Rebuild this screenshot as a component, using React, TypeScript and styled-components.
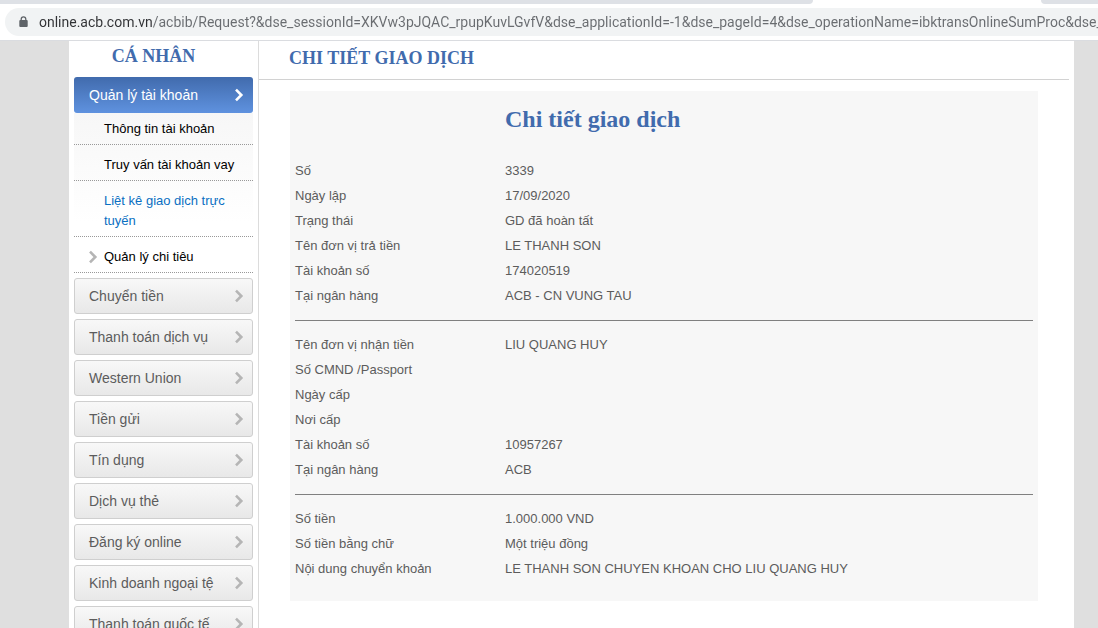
import React from "react";
import styled, { createGlobalStyle, css } from "styled-components";

const sans = `"Liberation Sans", Arial, sans-serif`;
const serif = `"Liberation Serif", "Times New Roman", serif`;

const GlobalStyle = createGlobalStyle`
  *, *::before, *::after { box-sizing: border-box; }
  html { height: 100%; }
  body {
    margin: 0;
    height: 100%;
    overflow: hidden;
    background: #dfdfdf;
    color: #5c5c5c;
    font: 13px/25px ${sans};
  }
  #root { height: 100%; }
`;

const Screen = styled.div`
  display: flex;
  flex-direction: column;
  height: 100%;
`;

const TabStrip = styled.div`
  flex: none;
  display: flex;
  height: 4px;
  background: #fff;
`;

const TabEdge = styled.div<{ $side: "left" | "right" }>`
  background: #dee1e6;
  ${({ $side }) =>
    $side === "left"
      ? css`
          flex: 1;
          border-bottom-right-radius: 4px;
        `
      : css`
          width: 57px;
          margin-left: 228px;
          border-bottom-left-radius: 4px;
        `}
`;

const Toolbar = styled.div`
  flex: none;
  padding: 4px 0 4px 5px;
  background: #fff;
  border-bottom: 1px solid #dadce0;
`;

const AddressBar = styled.label`
  display: flex;
  align-items: center;
  gap: 11px;
  height: 28px;
  padding-left: 14px;
  background: #f1f3f4;
  border-radius: 14px 0 0 14px;
`;

const AddressInput = styled.input`
  flex: 1;
  min-width: 0;
  height: 28px;
  padding: 0;
  border: 0;
  outline: 0;
  color: transparent;
  background: linear-gradient(to right, #303134 114px, #696c70 114px);
  -webkit-background-clip: text;
  background-clip: text;
  font: 14px/28px Roboto, "Noto Sans", sans-serif;
`;

const Page = styled.div`
  flex: 1;
  min-height: 0;
  display: flex;
  margin: 0 24px 0 69px;
  overflow: hidden;
  background: #fff;
`;

const Sidebar = styled.aside`
  flex: none;
  width: 190px;
  padding: 0 5px;
  border-right: 1px solid #dcdcdc;
`;

const SidebarTitle = styled.h2`
  margin: 0;
  padding: 3px 20px 9px 0;
  color: #416bad;
  font: bold 18px/24px ${serif};
  text-align: center;
`;

const Menu = styled.ul`
  margin: 0;
  padding: 0;
  list-style: none;
`;

const MenuItem = styled.li`
  margin-bottom: 5px;
`;

const MenuButton = styled.button<{ $active?: boolean }>`
  display: flex;
  align-items: center;
  justify-content: space-between;
  width: 100%;
  height: 36px;
  padding: 0 8px 0 14px;
  border: 1px solid #cfcfcf;
  border-radius: 3px;
  background: linear-gradient(#f8f8f8, #e8e8e8);
  color: #5c5c5c;
  font: 14px/20px ${sans};
  text-align: left;
  white-space: nowrap;
  ${({ $active }) =>
    $active &&
    css`
      border-color: transparent;
      background: linear-gradient(#416bad, #5f92df) border-box;
      color: #fff;
    `}
`;

const SubMenu = styled.ul`
  margin: 0;
  padding: 0;
  list-style: none;
  background: linear-gradient(#f7f7f7, #fff 110px);
`;

const SubItem = styled.li<{ $first?: boolean }>`
  padding: ${({ $first }) => ($first ? "6px 0 5px" : "10px 0 5px")};
  border-bottom: 1px dotted #999;
`;

const SubLink = styled.a<{ $current?: boolean }>`
  display: flex;
  align-items: center;
  padding-left: 14px;
  padding-right: 20px;
  color: ${({ $current }) => ($current ? "#0a6fc2" : "#000")};
  font: 13px/20px ${sans};
  text-decoration: none;
`;

const SubMarker = styled.span`
  flex: none;
  display: flex;
  width: 16px;
`;

const SubText = styled.span`
  flex: none;
  width: 134px;
`;

const Main = styled.main`
  flex: 1;
  min-width: 0;
  padding-right: 5px;
`;

const PageTitle = styled.h1`
  margin: 0;
  padding: 5px 30px 9px;
  border-bottom: 1px solid #d2d2d2;
  color: #416bad;
  font: bold 18px/24px ${serif};
`;

const Panel = styled.section`
  margin: 11px 31px 0;
  padding: 12px 5px 20px;
  background: #f7f7f7;
`;

const PanelTitle = styled.h2`
  margin: 0;
  padding: 0 0 23px 210px;
  color: #416bad;
  font: bold 24px/32px ${serif};
`;

const Divider = styled.hr`
  height: 1px;
  margin: 12px 0 11px;
  border: 0;
  background: #808080;
`;

const DetailTable = styled.table`
  width: 100%;
  table-layout: fixed;
  border-collapse: collapse;
`;

const Label = styled.th`
  width: 210px;
  height: 25px;
  padding: 0;
  font-weight: normal;
  text-align: left;
`;

const Value = styled.td`
  height: 25px;
  padding: 0;
`;

const LockIcon = () => (
  <svg width="9" height="12" viewBox="0 0 9 12" aria-hidden="true">
    <path d="M2.2 5V3.2a2.3 2.3 0 0 1 4.6 0V5" fill="none" stroke="#5f6368" strokeWidth="1.3" />
    <rect x="0.3" y="4" width="8.4" height="7" rx="1" fill="#5f6368" />
  </svg>
);

const Chevron = ({ color = "#b5b5b5" }: { color?: string }) => (
  <svg width="10" height="14" viewBox="0 0 10 14" aria-hidden="true">
    <path d="M2 1.7 7.3 7 2 12.3" fill="none" stroke={color} strokeWidth="2.6" />
  </svg>
);

type SubEntry = { text: string; current?: boolean; expandable?: boolean };

const accountLinks: SubEntry[] = [
  { text: "Thông tin tài khoản" },
  { text: "Truy vấn tài khoản vay" },
  { text: "Liệt kê giao dịch trực tuyến", current: true },
  { text: "Quản lý chi tiêu", expandable: true },
];

const menuEntries = [
  "Chuyển tiền",
  "Thanh toán dịch vụ",
  "Western Union",
  "Tiền gửi",
  "Tín dụng",
  "Dịch vụ thẻ",
  "Đăng ký online",
  "Kinh doanh ngoại tệ",
  "Thanh toán quốc tế",
];

const groups: [string, string][][] = [
  [
    ["Số", "3339"],
    ["Ngày lập", "17/09/2020"],
    ["Trạng thái", "GD đã hoàn tất"],
    ["Tên đơn vị trả tiền", "LE THANH SON"],
    ["Tài khoản số", "174020519"],
    ["Tại ngân hàng", "ACB - CN VUNG TAU"],
  ],
  [
    ["Tên đơn vị nhận tiền", "LIU QUANG HUY"],
    ["Số CMND /Passport", ""],
    ["Ngày cấp", ""],
    ["Nơi cấp", ""],
    ["Tài khoản số", "10957267"],
    ["Tại ngân hàng", "ACB"],
  ],
  [
    ["Số tiền", "1.000.000 VND"],
    ["Số tiền bằng chữ", "Một triệu đồng"],
    ["Nội dung chuyển khoản", "LE THANH SON CHUYEN KHOAN CHO LIU QUANG HUY"],
  ],
];

const address =
  "online.acb.com.vn/acbib/Request?&dse_sessionId=XKVw3pJQAC_rpupKuvLGvfV&dse_applicationId=-1&dse_pageId=4&dse_operationName=ibktransOnlineSumProc&dse_";

export default function App() {
  return (
    <Screen>
      <GlobalStyle />
      <TabStrip>
        <TabEdge $side="left" />
        <TabEdge $side="right" />
      </TabStrip>
      <Toolbar>
        <AddressBar>
          <LockIcon />
          <AddressInput type="text" aria-label="Address" defaultValue={address} spellCheck={false} />
        </AddressBar>
      </Toolbar>
      <Page>
        <Sidebar>
          <SidebarTitle>CÁ NHÂN</SidebarTitle>
          <Menu>
            <MenuItem>
              <MenuButton type="button" $active>
                Quản lý tài khoản
                <Chevron color="#fff" />
              </MenuButton>
              <SubMenu>
                {accountLinks.map((link, i) => (
                  <SubItem key={link.text} $first={i === 0}>
                    <SubLink href="#" $current={link.current}>
                      <SubMarker>{link.expandable && <Chevron />}</SubMarker>
                      <SubText>{link.text}</SubText>
                    </SubLink>
                  </SubItem>
                ))}
              </SubMenu>
            </MenuItem>
            {menuEntries.map((text) => (
              <MenuItem key={text}>
                <MenuButton type="button">
                  {text}
                  <Chevron />
                </MenuButton>
              </MenuItem>
            ))}
          </Menu>
        </Sidebar>
        <Main>
          <PageTitle>CHI TIẾT GIAO DỊCH</PageTitle>
          <Panel>
            <PanelTitle>Chi tiết giao dịch</PanelTitle>
            {groups.map((rows, i) => (
              <React.Fragment key={i}>
                {i > 0 && <Divider />}
                <DetailTable>
                  <tbody>
                    {rows.map(([label, value]) => (
                      <tr key={label}>
                        <Label scope="row">{label}</Label>
                        <Value>{value}</Value>
                      </tr>
                    ))}
                  </tbody>
                </DetailTable>
              </React.Fragment>
            ))}
          </Panel>
        </Main>
      </Page>
    </Screen>
  );
}
